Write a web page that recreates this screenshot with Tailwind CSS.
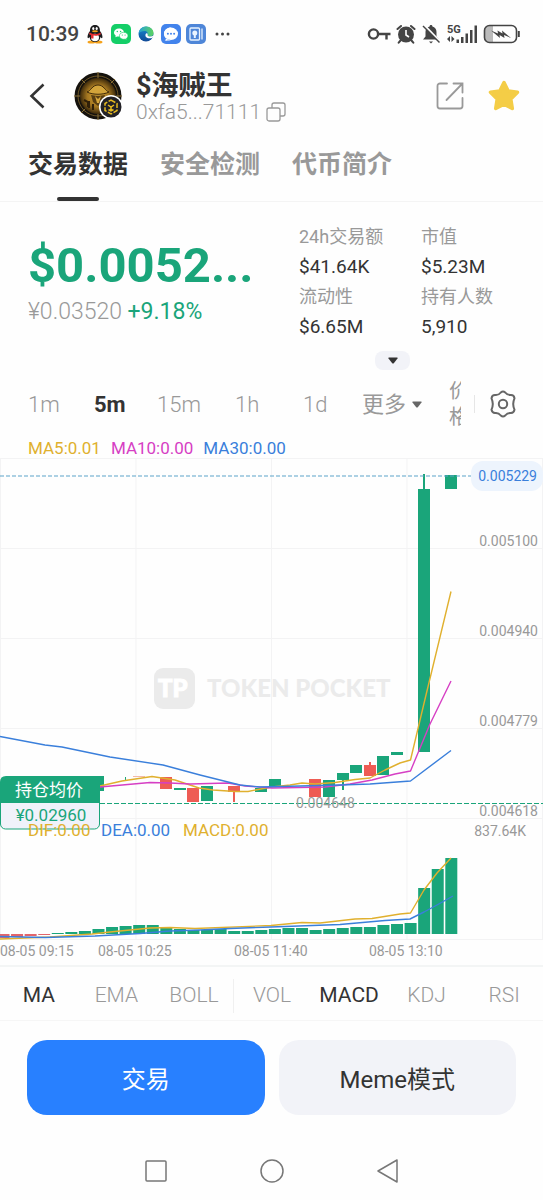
<!DOCTYPE html>
<html lang="zh-CN">
<head>
    <meta charset="UTF-8">
    <meta name="viewport" content="width=device-width, initial-scale=1.0">
    <title>$海贼王</title>
    <script src="https://cdn.jsdelivr.net/npm/@tailwindcss/browser@4"></script>
</head>
<body class="bg-[#fefefe] font-['Roboto','Noto_Sans_CJK_SC',sans-serif] text-[#333]">
    <!-- Status bar -->
    <div class="flex h-[68px] items-center justify-between pr-[22px] pl-[26px]">
        <div class="flex items-center gap-[7px]">
            <span class="text-[21px] leading-6 font-medium text-[#444]">10:39</span>
            <svg class="h-[20px] w-[18px]" viewBox="0 0 18 20">
                <ellipse cx="5.5" cy="18" rx="4" ry="1.6" fill="#f5a21b"/>
                <ellipse cx="12.5" cy="18" rx="4" ry="1.6" fill="#f5a21b"/>
                <path d="M9 1C5.500 1 4 3.500 4 7c-2 2.500-2.800 5-2.300 7 .6.6 1.500-.6 1.800-1C4 16.500 6 18 9 18s5-1.500 5.500-5c.3.400 1.200 1.600 1.800 1 .5-2-.3-4.500-2.300-7 0-3.500-1.500-6-5-6z" fill="#1c1c1e"/>
                <ellipse cx="9" cy="13.5" rx="4" ry="3.8" fill="#fff"/>
                <ellipse cx="7.3" cy="4.5" rx="1.1" ry="1.6" fill="#fff"/>
                <ellipse cx="10.7" cy="4.5" rx="1.1" ry="1.6" fill="#fff"/>
                <ellipse cx="9" cy="7.3" rx="3" ry="1" fill="#f5a21b"/>
                <path d="M3.500 8.500c3.500 2 7.500 2 11 0l.4 1.700c-2.400 1.300-5 1.700-7.400 1.400v3H5v-3.500c-.8-.2-1.400-.5-1.900-.9z" fill="#e22b2f"/>
            </svg>
            <svg class="size-[20px]" viewBox="0 0 20 20">
                <rect width="20" height="20" rx="5" fill="#14ce67"/>
                <path d="M8 4.500c-2.900 0-5 1.800-5 4.100 0 1.300.7 2.400 1.800 3.200l-.5 1.500 1.900-.9c.6.200 1.200.2 1.800.2 2.800 0 5-1.700 5-4S10.800 4.500 8 4.500z" fill="#fff"/>
                <path d="M12.700 8.300c-2.400 0-4.300 1.500-4.300 3.500s1.900 3.500 4.300 3.500c.5 0 1-.1 1.500-.2l1.500.8-.4-1.300c1-.7 1.700-1.700 1.700-2.800 0-2-1.900-3.500-4.300-3.500z" fill="#fff" stroke="#14ce67" stroke-width=".6"/>
                <g fill="#14ce67"><circle cx="6.3" cy="7.5" r=".7"/><circle cx="9.6" cy="7.5" r=".7"/><circle cx="11.3" cy="11" r=".6"/><circle cx="14.1" cy="11" r=".6"/></g>
            </svg>
            <svg class="size-[16px]" viewBox="0 0 16 16">
                <defs>
                    <linearGradient id="edgeTop" x2="1"><stop stop-color="#249fd9"/><stop offset="1" stop-color="#5cd35e"/></linearGradient>
                    <linearGradient id="edgeLow" x2="0" y2="1"><stop stop-color="#168cd2"/><stop offset="1" stop-color="#114a97"/></linearGradient>
                </defs>
                <circle cx="8" cy="8" r="7.5" fill="url(#edgeLow)"/>
                <path d="M.6 7.500C1 3.500 4 .5 8 .5c4.500 0 7.500 3 7.500 6.400 0 2.200-1.600 3.600-3.800 3.600-1.800 0-2.600-.7-2.200-1.400C10.400 7 9 5 6.500 5 3.900 5 1.600 6 .6 7.500z" fill="url(#edgeTop)"/>
                <path d="M7.500 8.500c-.5 2.200 1.300 3.700 3.800 3.700 1.600 0 3.200-.3 4.500-1.500V9.500c-2.800 1.600-5.500 1.200-6.300-.2.600-1.200 0-2-.7-2-.6 0-1.100.4-1.300 1.200z" fill="#fff"/>
            </svg>
            <svg class="size-[20px]" viewBox="0 0 20 20">
                <rect width="20" height="20" rx="5" fill="#4283ec"/>
                <path d="M10 3.500c-4 0-7 2.700-7 6.300s3 6.300 7 6.300c-1 .6-5.500.8-6.300.5 1-.6 1.300-1.500 1.200-2.500" fill="#fff"/>
                <ellipse cx="10" cy="9.8" rx="7" ry="6.2" fill="#fff"/>
                <g fill="#4283ec"><circle cx="6.9" cy="9.8" r="1"/><circle cx="10" cy="9.8" r="1"/><circle cx="13.1" cy="9.8" r="1"/></g>
            </svg>
            <svg class="-ml-0.5 size-[20px]" viewBox="0 0 20 20">
                <rect width="20" height="20" rx="5" fill="#4e86d8"/>
                <rect x="4" y="4" width="9.5" height="12" rx="1" fill="#4e86d8" stroke="#e8f3ff" stroke-width="1.3"/>
                <path d="M16 4.500v11" stroke="#e8f3ff" stroke-width="1.3"/>
                <circle cx="8.8" cy="9" r="2.5" fill="#e8f3ff"/>
                <path d="M7.800 11h2v3h-2z" fill="#e8f3ff"/>
            </svg>
            <svg class="ml-0.5 h-[4px] w-[16px]" viewBox="0 0 16 4" fill="#444"><circle cx="2" cy="2" r="1.5"/><circle cx="7.5" cy="2" r="1.5"/><circle cx="13" cy="2" r="1.5"/></svg>
        </div>
        <div class="flex items-center gap-[5px] text-[#444]">
            <svg class="h-[20px] w-[24px]" viewBox="0 0 24 20" fill="none" stroke="currentColor" stroke-width="2.4">
                <circle cx="6.5" cy="10" r="4.6"/><path d="M11 10h12.500M19.500 10v5.500"/>
            </svg>
            <svg class="size-[20px]" viewBox="0 0 20 20">
                <circle cx="10" cy="10.5" r="8" fill="currentColor"/>
                <path d="M1.500 5 5 2M18.500 5 15 2M4.500 16.500l-1.800 2.200M15.500 16.500l1.800 2.200" stroke="currentColor" stroke-width="2" stroke-linecap="round"/>
                <path d="M10 6v5l3 2" stroke="#fff" stroke-width="1.6" fill="none"/>
            </svg>
            <svg class="size-[20px]" viewBox="0 0 20 20">
                <path d="M10 1c-.9 0-1.400.6-1.400 1.400C6 3 4.500 5 4.500 8v4.500L2 15.500h16l-2.500-3V8c0-3-1.500-5-4.100-5.600C11.400 1.600 10.900 1 10 1zM8 17.500h4l-2 2z" fill="currentColor"/>
                <path d="M3.600 1.500 19.500 18" stroke="#fefefe" stroke-width="2"/>
                <path d="M2 2l16.500 16.500" stroke="currentColor" stroke-width="1.5"/>
            </svg>
            <svg class="h-[20px] w-[32px]" viewBox="0 0 32 20" fill="currentColor">
                <text x="1" y="9" font-size="11" font-weight="700">5G</text>
                <path d="M4 12v6l-3-3zM5.500 12v6l3-3zM10.500 15.500h2.500V19h-2.500zM15 13h2.500v6H15zM19.500 9.500H22V19h-2.500zM24 6h2.500v13H24zM28.500 1.500H31V19h-2.500z"/>
            </svg>
            <svg class="h-[20px] w-[38px]" viewBox="0 0 38 20">
                <path d="M6 2h4v16H6a4 4 0 0 1-4-4V6a4 4 0 0 1 4-4z" fill="#bbb"/>
                <rect x="1.5" y="1.5" width="32" height="17" rx="5" fill="none" stroke="currentColor" stroke-width="1.6"/>
                <path d="M35.800 7v6" stroke="currentColor" stroke-width="2"/>
                <path d="m8 6.500 7 3-.5-3 5 3-.5-3 9 7.500-7-3 .5 3-5-3 .5 3z" fill="currentColor"/>
            </svg>
        </div>
    </div>

    <!-- Token header -->
    <header class="flex h-[62px] items-center pr-[22px] pb-[6px] pl-[28px]">
        <button aria-label="返回" class="mr-[28px]">
            <svg class="h-[28px] w-[18px]" viewBox="0 0 18 28" fill="none" stroke="#333" stroke-width="2.6"><path d="M15.500 2.500 3.500 14l12 11.500"/></svg>
        </button>
        <svg class="mr-[12px] size-[50px]" viewBox="0 0 50 50">
            <defs><radialGradient id="coin"><stop stop-color="#d8a637"/><stop offset=".6" stop-color="#a37620"/><stop offset="1" stop-color="#3d2a0b"/></radialGradient></defs>
            <circle cx="24" cy="25" r="23.5" fill="#15120d"/>
            <circle cx="24" cy="25" r="20" fill="none" stroke="#6b5426" stroke-width="1"/>
            <path d="M24 1v48M0 25h48M7 8l34 34M41 8 7 42" stroke="#8c7136" stroke-width="1"/>
            <circle cx="24" cy="25" r="18" fill="url(#coin)"/>
            <path d="M13 21c4-1 5-7 11-7s7 6 11 7c-6 3-16 3-22 0z" fill="#d3a43a" stroke="#3f2a0a"/>
            <path d="M17 24c4 1 10 1 14 0l-2 7-5 4-5-4z" fill="#5a3f12"/>
            <path d="M21 25l3 3 3-3-2 7h-2z" fill="#d6a63a"/>
            <path d="M10 29l4 2v5M15 30v7M19 33v6M27 35v5M35 26l3 2" stroke="#302009" stroke-width="2" fill="none"/>
            <circle cx="37" cy="36" r="12" fill="#fff"/>
            <circle cx="37" cy="36" r="10.5" fill="#222126"/>
            <g fill="none" stroke="#e5b91f" stroke-width="1.5"><path d="m37 29 6 3.500v7L37 43l-6-3.500v-7z" stroke-dasharray="5 1.500"/><path d="m34 34 3 2 3-2M37 36v4.500M34.500 38.500l2.500 1.500 2.500-1.500"/></g>
        </svg>
        <div class="flex-1 pt-1">
            <h1 class="text-[27px] leading-[28px] font-bold">$海贼王</h1>
            <button class="flex items-center gap-[5px] text-[21px] leading-6 font-light text-[#999]">0xfa5...71111
                <svg class="size-[20px]" viewBox="0 0 20 20" fill="none" stroke="#999" stroke-width="1.3"><rect x="1" y="6" width="13" height="13" rx="2"/><path d="M6 6V3a2 2 0 0 1 2-2h9a2 2 0 0 1 2 2v9a2 2 0 0 1-2 2h-3"/></svg>
            </button>
        </div>
        <div class="flex items-center gap-[22px]">
            <button aria-label="分享"><svg class="size-[30px]" viewBox="0 0 30 30" fill="none" stroke="#999" stroke-width="1.8" stroke-linecap="round"><path d="M12 2.500H5A2.500 2.500 0 0 0 2.500 5v20A2.500 2.500 0 0 0 5 27.500h20a2.500 2.500 0 0 0 2.500-2.500v-8M18.500 2.500h9v9M27 3 11.500 19"/></svg></button>
            <button aria-label="收藏"><svg class="size-[34px]" viewBox="0 0 34 34"><path d="m17 3.500 4.200 8.500 9.300 1.300-6.700 6.800 1.500 9.400-8.300-4.300-8.300 4.300 1.500-9.400-6.700-6.800L12.800 12z" fill="#f4cd46" stroke="#f4cd46" stroke-width="3.5" stroke-linejoin="round"/></svg></button>
        </div>
    </header>

    <nav class="flex h-[72px] gap-[32px] border-b border-[#f4f4f4] px-[28px] text-[25px] font-bold text-[#999]">
        <a href="#" class="flex flex-col items-center justify-between text-[#333]"><span class="pt-4">交易数据</span><span class="h-1 w-[42px] rounded-full bg-[#333]"></span></a>
        <a href="#" class="pt-4">安全检测</a>
        <a href="#" class="pt-4">代币简介</a>
    </nav>

    <!-- Price and stats -->
    <section class="grid grid-cols-[271fr_244fr] pt-[19px] pl-[28px]">
        <div class="pt-[15px]">
            <p class="text-[49px] leading-[60px] font-bold text-[#1aa57a]">$0.0052...</p>
            <p class="text-[23px] leading-8 font-light text-[#999]">¥0.03520 <span class="font-normal text-[#1aa57a]">+9.18%</span></p>
        </div>
        <dl class="grid grid-cols-2 text-[19px]">
            <div><dt class="text-[18px] leading-8 text-[#999]">24h交易额</dt><dd class="leading-7">$41.64K</dd></div>
            <div><dt class="text-[18px] leading-8 text-[#999]">市值</dt><dd class="leading-7">$5.23M</dd></div>
            <div><dt class="text-[18px] leading-8 text-[#999]">流动性</dt><dd class="leading-7">$6.65M</dd></div>
            <div><dt class="text-[18px] leading-8 text-[#999]">持有人数</dt><dd class="leading-7">5,910</dd></div>
        </dl>
    </section>
    <div class="flex justify-end pt-[10px] pr-[133px]">
        <button aria-label="展开" class="flex h-[19px] w-[35px] items-center justify-center rounded-lg bg-[#f2f3f8]">
            <svg class="h-[7px] w-[10px]" viewBox="0 0 10 7"><path d="M1 .5h8q1 0 .5 1L6 6Q5 7 4 6L.5 1.500Q0 .5 1 .5z" fill="#333"/></svg>
        </button>
    </div>

    <!-- Intervals -->
    <div class="grid h-[68px] grid-cols-[66fr_63fr_78fr_68fr_59fr_87fr_25fr_69fr] items-center pl-[28px] text-[22px] font-light text-[#999]">
        <button class="text-left">1m</button>
        <button class="text-left font-bold text-[#333]">5m</button>
        <button class="text-left">15m</button>
        <button class="text-left">1h</button>
        <button class="text-left">1d</button>
        <button class="flex items-center gap-[6px] font-normal">更多<svg class="h-[7px] w-[10px]" viewBox="0 0 10 7"><path d="M1 .5h8q1 0 .5 1L6 6Q5 7 4 6L.5 1.500Q0 .5 1 .5z" fill="#666"/></svg></button>
        <button class="w-[12px] overflow-hidden text-left text-[20px] leading-[26px] font-normal">价<br>格</button>
        <div class="flex h-[18px] items-center border-l border-[#e6e6e6] pl-[14px]">
            <button aria-label="设置"><svg class="size-[28px]" viewBox="0 0 28 28" fill="none" stroke="#666" stroke-width="2" stroke-linejoin="round"><path d="M11.800 2.500Q14 .5 16.200 2.500Q18.500 5.500 22 5Q25 5 25.500 8.300Q24.200 11.200 24.200 14Q24.200 16.800 25.500 19.700Q25 23 22 23Q18.500 22.500 16.200 25.500Q14 27.500 11.800 25.500Q9.500 22.500 6 23Q3 23 2.500 19.700Q3.800 16.800 3.800 14Q3.800 11.200 2.500 8.300Q3 5 6 5Q9.500 5.500 11.800 2.500z"/><circle cx="14" cy="14" r="4.2"/></svg></button>
        </div>
    </div>

    <div class="flex h-[20px] items-center gap-[10px] pl-[28px] text-[17px] leading-5">
        <span class="text-[#e0b02e]">MA5:0.01</span>
        <span class="text-[#d63fc4]">MA10:0.00</span>
        <span class="text-[#3a7fdb]">MA30:0.00</span>
    </div>

    <!-- Chart -->
    <svg id="chart" class="block h-auto w-full" viewBox="0 0 543 507" fill="none">
        <path d="M0 .5H543M0 90.500H543M0 180.500H543M0 270.500H543M0 360.500H543M0 481.500H543M.5 0V481M136 0V481M271.500 0V481M407 0V481M542.500 0V481" stroke="#f3f3f4"/>
        <rect x="154" y="210" width="41" height="41" rx="9" fill="#ebebeb"/>
        <text x="158" y="239" font-family="Lato" font-weight="900" font-size="24" fill="#fff" stroke="#fff">TP</text>
        <text x="207" y="239" font-family="Lato" font-weight="900" font-size="24" fill="#ebebeb">TOKEN POCKET</text>
        <g id="candles"></g>
        <path d="M0 18H472" stroke="#5ba3c9" stroke-dasharray="4 2"/>
        <path d="M100 345.500H543" stroke="#1aa57a" stroke-dasharray="5 2"/>
        <g stroke-width="1.4" stroke-linejoin="round">
            <path d="M100 328 122 323 152 318.500 175 322 199 330 213 332 235 333.500H248L258 331.500 272 329 290 327 302 325 315 326 335 324.500 355 321.500 370 320 385 312 400 305 410.500 302 426 237 451 133.500" stroke="#e0b02e"/>
            <path d="M100 329 150 324.500 170 325 190 326 228 325 245 328 272 330 325 329 350 326 372 322 395 316 410.500 313 430 266 451 223" stroke="#d63fc4"/>
            <path d="M0 278.500 45 287 62 289 110 299 163 307 200 317 240 327 260 329 340 327 370 326 397 324 410.500 323 451 292.500" stroke="#3a7fdb"/>
            <path d="M0 481 50 479 92 476 110 474 150 470 170 469.500 195 470.500 271 467.500 302 464.500 320 465 355 461 372 460.500 400 456 410.500 455 424 432 437 415 451 400" stroke="#e0b02e"/>
            <path d="M0 478.500 45 479.500 95 478 140 475.500 170 473 200 472 230 470.500 271 469 340 466.500 385 462.500 410 461 424 454 437 447 453 438" stroke="#3a7fdb"/>
        </g>
        <rect x="471" y="3" width="72" height="30" rx="12" fill="#edf4fd"/>
        <text x="537" y="23" font-size="14" text-anchor="end" fill="#3a7fdb">0.005229</text>
        <g font-size="14" fill="#999">
            <g text-anchor="end">
                <text x="538" y="88">0.005100</text>
                <text x="538" y="178">0.004940</text>
                <text x="538" y="268">0.004779</text>
                <text x="538" y="358">0.004618</text>
                <text x="526" y="378">837.64K</text>
            </g>
            <text x="296" y="350">0.004648</text>
            <text x="0" y="498">08-05 09:15</text>
            <text x="98" y="498">08-05 10:25</text>
            <text x="234" y="498">08-05 11:40</text>
            <text x="369" y="498">08-05 13:10</text>
        </g>
        <rect x=".5" y="330" width="99" height="41" rx="5" fill="#f0f2fa" stroke="#1aa57a"/>
        <path d="M0 345V324q0-6 6-6H100V345z" fill="#1aa57a"/>
        <g font-size="17">
            <text x="49" y="338" text-anchor="middle" fill="#fff">持仓均价</text>
            <text x="51" y="363" text-anchor="middle" fill="#1aa57a">¥0.02960</text>
            <text x="28" y="378" fill="#e0b02e">DIF:0.00</text>
            <text x="101" y="378" fill="#3a7fdb">DEA:0.00</text>
            <text x="183" y="378" fill="#e0b02e">MACD:0.00</text>
        </g>
    </svg>

    <!-- Indicators -->
    <div class="grid h-[56px] grid-cols-7 items-center border-t-2 border-b border-t-[#f3f5f5] border-b-[#f6f6f6] pt-1 text-[21px] font-light text-[#999]">
        <button class="font-normal text-[#333]">MA</button>
        <button>EMA</button>
        <button>BOLL</button>
        <button class="h-[34px] border-l border-[#f0f0f0]">VOL</button>
        <button class="font-normal text-[#333]">MACD</button>
        <button>KDJ</button>
        <button>RSI</button>
    </div>

    <div class="grid grid-cols-2 gap-[14px] px-[27px] pt-[19px] text-[24px]">
        <button class="h-[75px] rounded-[20px] bg-[#2880ff] pt-1 text-white">交易</button>
        <button class="h-[75px] rounded-[20px] bg-[#f2f3f8] pt-1">Meme模式</button>
    </div>

    <!-- System navigation -->
    <div class="flex items-center justify-center gap-[92px] pt-[44px]">
        <button aria-label="最近任务"><svg class="size-[24px]" viewBox="0 0 24 24" fill="none" stroke="#777" stroke-width="1.5"><rect x="2" y="2" width="20" height="20" rx="1"/></svg></button>
        <button aria-label="主页"><svg class="size-[24px]" viewBox="0 0 24 24" fill="none" stroke="#777" stroke-width="1.5"><circle cx="12" cy="12" r="11"/></svg></button>
        <button aria-label="后退"><svg class="size-[24px]" viewBox="0 0 24 24" fill="none" stroke="#777" stroke-width="1.5" stroke-linejoin="round"><path d="M21 1v22L2 12z"/></svg></button>
    </div>

    <script>
        const UP = "#1aa57a", DOWN = "#ee5c54";
        // x, top, bottom, colour, wick top, wick bottom
        const candles = [
            [92, 318, 333, UP], [160, 319, 331, DOWN], [174, 330, 332, UP],
            [187, 330, 344, DOWN], [201, 328, 343, UP], [228, 328, 334, DOWN, 328, 344],
            [255, 330, 334, UP], [269, 321, 329, UP], [309, 321, 339, DOWN],
            [323, 322, 339, UP], [337, 315, 322, UP, 315, 332], [350, 307, 315, UP],
            [364, 307, 318, DOWN, 304, 318], [377, 298, 317, UP], [391, 294, 297, UP],
            [418, 31, 294, UP, 16, 294], [445, 17, 31, UP]
        ];
        // distance above the zero line, oldest first
        const macd = [-4, -3, -2, -1, 1, 2, 3, 5, 7, 8, 9, 9, 6, 5, 4, 4, 5, 3, 3, 4, 5, 6, 6, 4, 5, 6, 7, 7, 9, 10, 11, 46, 65, 76];

        let shapes = `<rect x="125" y="319" width="1" height="4" fill="${UP}"/><rect x="133" y="318" width="12" height="1" fill="#f3b9a8"/>`;
        candles.forEach(([x, top, bottom, color, high, low]) => {
            shapes += `<rect x="${x}" y="${top}" width="12" height="${bottom - top}" fill="${color}"/>`;
            if (low) shapes += `<rect x="${x + 5}" y="${high}" width="2" height="${low - high}" fill="${color}"/>`;
        });
        macd.forEach((v, i) => {
            const x = 445.3 - (macd.length - 1 - i) * 13.57;
            shapes += `<rect x="${x}" y="${v > 0 ? 476 - v : 476}" width="12" height="${Math.abs(v)}" fill="${v > 0 ? UP : "#e2656a"}"/>`;
        });
        document.getElementById("candles").innerHTML = shapes;
    </script>
</body>
</html>
